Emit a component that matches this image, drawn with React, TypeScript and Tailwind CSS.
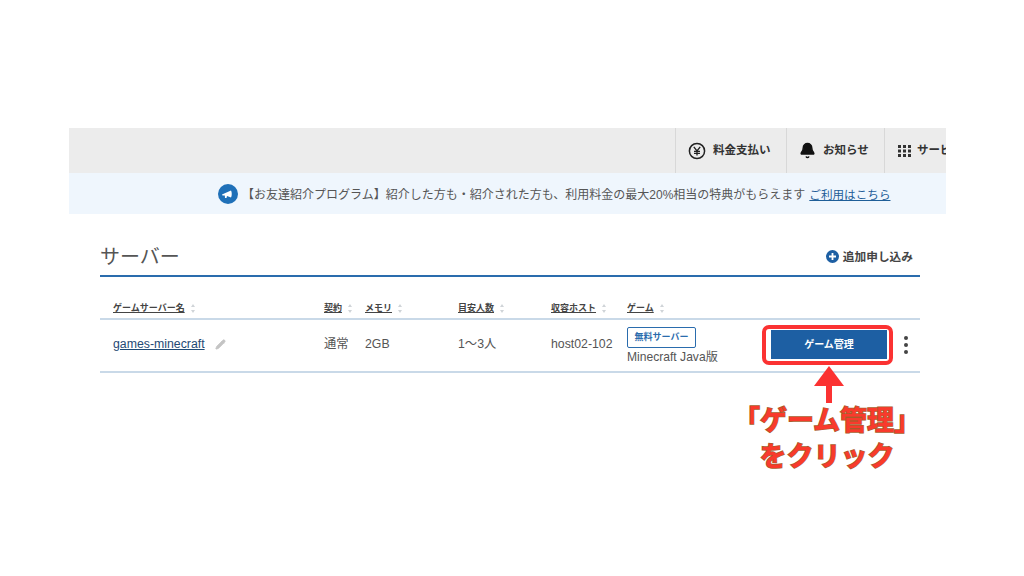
import React from "react";
import { Bell, Pencil } from "lucide-react";

const font = { fontFamily: '"Liberation Sans","Noto Sans CJK JP",sans-serif' };

function Sort() {
  return (
    <svg width="6" height="11" viewBox="0 0 6 11" className="ml-[5px] shrink-0">
      <path d="M3 1 5 4H1Z M3 10 5 7H1Z" fill="#d0d4d8" />
    </svg>
  );
}

function Th({ w, label }: { w: string; label: string }) {
  return (
    <div className={`${w} flex items-center shrink-0`}>
      <span className="text-[9px] font-bold text-[#444] underline leading-none">{label}</span>
      <Sort />
    </div>
  );
}

function NavItem({ children, w }: { children: React.ReactNode; w: string }) {
  return (
    <div className={`${w} h-full border-l border-[#d8d8d8] flex items-center pl-[13px] gap-[7px] text-[11.5px] font-bold text-[#333] whitespace-nowrap shrink-0 overflow-hidden`}>
      {children}
    </div>
  );
}

export default function App() {
  return (
    <div style={font} className="relative w-[1024px] h-[576px] bg-white overflow-hidden">
      <div className="ml-[69px] pt-[128px] w-[877px]">
        <div className="h-[45px] bg-[#ececec] flex justify-end overflow-hidden">
          <NavItem w="w-[111px]">
            <svg width="18" height="18" viewBox="0 0 18 18" fill="none" stroke="#222" strokeWidth="1.5" className="shrink-0 -ml-[1px]">
              <circle cx="9" cy="9" r="7.6" />
              <path d="M5.8 4.8 9 9l3.2-4.2M9 9v4.6M6 9.4h6M6 11.4h6" strokeWidth="1.3" />
            </svg>
            <span>料金支払い</span>
          </NavItem>
          <NavItem w="w-[98px]">
            <Bell size={17} fill="#111" stroke="#111" className="shrink-0 -ml-[1px]" />
            <span>お知らせ</span>
          </NavItem>
          <NavItem w="w-[62px]">
            <svg width="14" height="14" viewBox="0 0 14 14" fill="#333" className="shrink-0 -mr-[2px]">
              <rect x="0" y="1" width="3" height="3" /><rect x="5" y="1" width="3" height="3" /><rect x="10" y="1" width="3" height="3" />
              <rect x="0" y="5.5" width="3" height="3" /><rect x="5" y="5.5" width="3" height="3" /><rect x="10" y="5.5" width="3" height="3" />
              <rect x="0" y="10" width="3" height="3" /><rect x="5" y="10" width="3" height="3" /><rect x="10" y="10" width="3" height="3" />
            </svg>
            <span>サービス</span>
          </NavItem>
        </div>

        <div className="h-[41px] bg-[#eff6fd] flex items-center pl-[149px] pt-[3px] text-[12px] text-[#555] whitespace-nowrap">
          <svg width="20" height="20" viewBox="0 0 20 20" className="shrink-0 mr-[4px] -mt-[3px]">
            <circle cx="10" cy="10" r="10" fill="#1f70b8" />
            <path d="M4 10.5 13 6.5c1 1.5 1 5.500 0 7L9 12l-.5 2H7l-.2-2.500L4.500 11.500Z" fill="#fff" />
          </svg>
          <span>【お友達紹介プログラム】紹介した方も・紹介された方も、利用料金の最大20%相当の特典がもらえます</span>
          <span className="ml-[4px] underline text-[#1e5e98] text-[11.600px]">ご利用はこちら</span>
        </div>

        <div className="pl-[31px] pr-[26px]">
          <div className="h-[62px] mt-[1px] border-b-2 border-[#2a6cad] flex items-center justify-between pt-[23px]">
            <span className="text-[20px] text-[#555] leading-none">サーバー</span>
            <div className="flex items-center gap-[4px] pr-[7px]">
              <svg width="13" height="13" viewBox="0 0 13 13" className="shrink-0">
                <circle cx="6.500" cy="6.500" r="6.500" fill="#1d5fa3" />
                <path d="M6.500 3v7M3 6.500h7" stroke="#fff" strokeWidth="1.800" />
              </svg>
              <span className="text-[11.700px] font-bold text-[#444]">追加申し込み</span>
            </div>
          </div>

          <div className="h-[43px] border-b-2 border-[#c9d9e8] flex items-center pl-[13px] pt-[22px]">
            <Th w="w-[211px]" label="ゲームサーバー名" />
            <Th w="w-[41px]" label="契約" />
            <Th w="w-[93px]" label="メモリ" />
            <Th w="w-[93px]" label="目安人数" />
            <Th w="w-[76px]" label="収容ホスト" />
            <Th w="w-[100px]" label="ゲーム" />
          </div>

          <div className="h-[53px] border-b-2 border-[#c9d9e8] flex items-center pl-[13px] text-[12.300px] text-[#555] whitespace-nowrap">
            <div className="w-[211px] flex items-center shrink-0 pb-[2px]">
              <span className="underline text-[#1f4a75]">games-minecraft</span>
              <Pencil size={11} fill="#c4c4c4" stroke="#c4c4c4" className="ml-[10px] shrink-0" />
            </div>
            <div className="w-[41px] shrink-0 pb-[2px]">通常</div>
            <div className="w-[93px] shrink-0 pb-[2px]">2GB</div>
            <div className="w-[93px] shrink-0 pb-[2px]">1〜3人</div>
            <div className="w-[76px] shrink-0 pb-[2px]">host02-102</div>
            <div className="w-[143px] shrink-0 flex flex-col items-start gap-[2px]">
              <span className="h-[21px] w-[69px] border border-[#2a6cad] rounded-[2px] flex items-center justify-center text-[9px] font-bold text-[#2a6cad] leading-none">無料サーバー</span>
              <span className="text-[12.100px] leading-[14px]">Minecraft Java版</span>
            </div>
            <button className="ml-[1px] w-[116px] h-[29px] mb-[2px] bg-[#1d5fa3] text-white text-[10px] font-bold shrink-0 flex items-center justify-center">ゲーム管理</button>
            <div className="ml-[17px] pb-[2px] flex flex-col gap-[3px]">
              <span className="w-[4px] h-[4px] rounded-full bg-[#444]" />
              <span className="w-[4px] h-[4px] rounded-full bg-[#444]" />
              <span className="w-[4px] h-[4px] rounded-full bg-[#444]" />
            </div>
          </div>
        </div>
      </div>

      {/* annotation overlay */}
      <div className="absolute left-[762px] top-[325px] w-[131px] h-[40px] border-[4px] border-[#fb3232] rounded-[7px]" />
      <svg className="absolute left-[811px] top-[364px]" width="36" height="42" viewBox="0 0 36 42">
        <path d="M18 2 33 22H21V39H15V22H3Z" fill="#fb3232" />
      </svg>
      <div className="absolute left-[731px] top-[403px] w-[192px] text-center text-[#f93a2c] font-bold text-[27px] leading-[36px] whitespace-nowrap [paint-order:stroke_fill] [-webkit-text-stroke:1.5px_#a85a2a]">
        <div>「ゲーム管理」</div>
        <div>をクリック</div>
      </div>
    </div>
  );
}
